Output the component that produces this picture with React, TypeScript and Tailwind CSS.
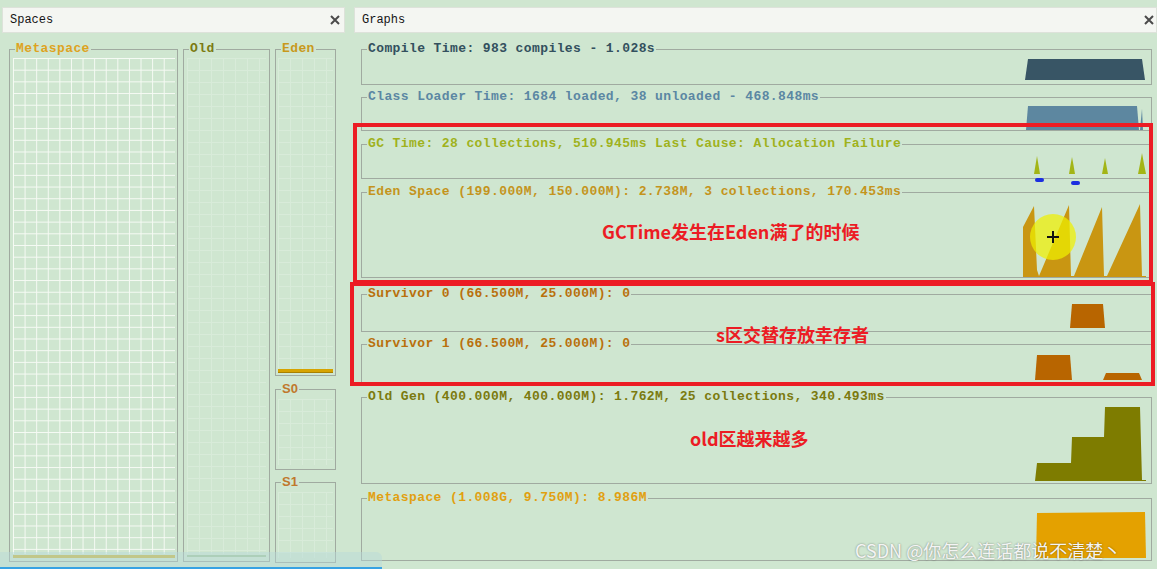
import React from "react";

const mono =
  "font-['Liberation_Mono',monospace] font-bold text-[13px] tracking-[0.4px] leading-[14px] whitespace-nowrap";

const faintGrid =
  "bg-[linear-gradient(to_right,#d8ebd9_1px,transparent_1px),linear-gradient(to_bottom,#d8ebd9_1px,transparent_1px)] bg-size-[12px_12px]";

type GProps = {
  label: string;
  cls: string;
  top: number;
  hh: number;
  h: string;
  mt: string;
  children?: React.ReactNode;
};

function Graph({ label, cls, top, hh, h, mt, children }: GProps) {
  return (
    <fieldset className={`${h} ${mt} min-w-0 border border-[#a0aaa0]`}>
      <legend className={`ml-[5px] px-[1px] ${mono} ${cls}`}>{label}</legend>
      <svg
        width={788}
        height={hh - 15}
        viewBox={`363 ${top + 14} 788 ${hh - 15}`}
        className="block"
      >
        {children}
      </svg>
    </fieldset>
  );
}

function Header({ title, pr }: { title: string; pr: string }) {
  return (
    <div
      className={`h-[26px] shrink-0 flex items-center justify-between pl-[7px] ${pr} bg-[#f4f6f2] border border-[#dde2da]`}
    >
      <span className="font-['Liberation_Mono',monospace] text-[12px] text-[#151515]">
        {title}
      </span>
      <svg width="10" height="10" viewBox="0 0 10 10">
        <path d="M1 1 L9 9 M9 1 L1 9" stroke="#4a4a4a" strokeWidth="2" />
      </svg>
    </div>
  );
}

export default function App() {
  return (
    <div className="relative w-[1157px] h-[569px] overflow-hidden bg-[#cfe6d0] pt-[7px] flex">
      {/* Spaces panel */}
      <div className="ml-[2px] w-[343px] flex flex-col">
        <Header title="Spaces" pr="pr-[4px]" />
        <div className="flex pl-[7px] pt-[9px] gap-[5px]">
          <fieldset className="w-[169px] h-[520px] min-w-0 border border-[#a0aaa0]">
            <legend className={`ml-[5px] px-[1px] ${mono} text-[#dea31f]`}>Metaspace</legend>
            <div className="ml-[3px] mt-[2px] w-[162px] h-[496px] bg-[linear-gradient(to_right,#f6faf4_1px,transparent_1px),linear-gradient(to_bottom,#f6faf4_1px,transparent_1px)] bg-size-[11.6px_11.7px]" />
            <div className="ml-[3px] mt-[1px] w-[162px] h-[3px] bg-[#cbb947]" />
          </fieldset>
          <fieldset className="w-[87px] h-[520px] min-w-0 border border-[#a0aaa0]">
            <legend className={`ml-[5px] px-[1px] ${mono} text-[#7b7a12]`}>Old</legend>
            <div className={`ml-[3px] mt-[2px] w-[79px] h-[496px] ${faintGrid}`} />
            <div className="ml-[3px] mt-[1px] w-[79px] h-[2px] bg-[#a6c79e]" />
          </fieldset>
          <div className="w-[61px] flex flex-col">
            <fieldset className="h-[334px] min-w-0 border border-[#a0aaa0]">
              <legend className={`ml-[5px] px-[1px] ${mono} text-[#c8991c]`}>Eden</legend>
              <div className={`ml-[2px] mt-[2px] w-[55px] h-[311px] ${faintGrid}`} />
              <div className="ml-[2px] w-[55px] h-[4px] bg-[#d6a300] border-b border-[#a88000]" />
            </fieldset>
            <fieldset className="mt-[6px] h-[88px] min-w-0 border border-[#a0aaa0]">
              <legend className={`ml-[5px] px-[1px] font-['Liberation_Sans',sans-serif] font-bold text-[13px] leading-[14px] text-[#c0782c]`}>
                S0
              </legend>
              <div className={`ml-[2px] mt-[3px] w-[55px] h-[66px] ${faintGrid}`} />
            </fieldset>
            <fieldset className="mt-[5px] h-[88px] min-w-0 border border-[#a0aaa0]">
              <legend className={`ml-[5px] px-[1px] font-['Liberation_Sans',sans-serif] font-bold text-[13px] leading-[14px] text-[#c0782c]`}>
                S1
              </legend>
              <div className={`ml-[2px] mt-[3px] w-[55px] h-[66px] ${faintGrid}`} />
            </fieldset>
          </div>
        </div>
      </div>

      {/* Graphs panel */}
      <div className="ml-[9px] flex-1 flex flex-col">
        <Header title="Graphs" pr="pr-[2px]" />
        <div className="flex flex-col pl-[7px] pr-[5px]">
          <Graph label="Compile Time: 983 compiles - 1.028s" cls="text-[#33505e]" top={42} hh={43} h="h-[43px]" mt="mt-[9px]">
            <polygon points="1026,80 1029,59 1143,59 1146,80" fill="#385565" />
          </Graph>
          <Graph label="Class Loader Time: 1684 loaded, 38 unloaded - 468.848ms" cls="text-[#5b87a3]" top={90} hh={41} h="h-[41px]" mt="mt-[5px]">
            <polygon points="1027,130 1029,106 1138,106 1140,130" fill="#5d87a0" />
            <polygon points="1141,130 1143,109 1144,130" fill="#5d87a0" />
          </Graph>
          <Graph label="GC Time: 28 collections, 510.945ms Last Cause: Allocation Failure" cls="text-[#9fb21c]" top={137} hh={42} h="h-[42px]" mt="mt-[6px]">
            <polygon points="1035,174 1036.5,165 1038,156 1039.5,165 1041,174" fill="#a3b516" />
            <polygon points="1070,174 1071.5,165 1073,157 1074.5,165 1076,174" fill="#a3b516" />
            <polygon points="1103,174 1104.5,166 1106,158 1107.5,166 1109,174" fill="#a3b516" />
            <polygon points="1139,174 1141,164 1143,153 1145,164 1147,174" fill="#a3b516" />
          </Graph>
          <Graph label="Eden Space (199.000M, 150.000M): 2.738M, 3 collections, 170.453ms" cls="text-[#c4941c]" top={185} hh={93} h="h-[93px]" mt="mt-[6px]">
            <polygon
              points="1024,277 1024,227 1035,206 1038,270 1040,276 1070,205 1072,276 1075,276 1103,207 1105,276 1108,276 1141,204 1143,276 1147,276 1147,277"
              fill="#c99612"
            />
            <circle cx="1054" cy="237" r="23" fill="#eef000" opacity="0.72" />
            <path d="M1048 237 H1060 M1054 231 V243" stroke="#111" strokeWidth="2" />
          </Graph>
          <Graph label="Survivor 0 (66.500M, 25.000M): 0" cls="text-[#b9700c]" top={287} hh={45} h="h-[45px]" mt="mt-[9px]">
            <polygon points="1071,328 1073,304 1104,304 1106,328" fill="#b86500" />
          </Graph>
          <Graph label="Survivor 1 (66.500M, 25.000M): 0" cls="text-[#b9700c]" top={337} hh={46} h="h-[46px]" mt="mt-[5px]">
            <polygon points="1036,380 1038,355 1071,355 1073,380" fill="#b86500" />
            <polygon points="1104,380 1107,373 1140,373 1143,380" fill="#b86500" />
          </Graph>
          <Graph label="Old Gen (400.000M, 400.000M): 1.762M, 25 collections, 340.493ms" cls="text-[#7b7a0e]" top={390} hh={94} h="h-[94px]" mt="mt-[7px]">
            <polygon
              points="1036,481 1038,463 1072,463 1073,437 1105,437 1106,407 1141,407 1143,480 1147,480 1147,481"
              fill="#7e7c00"
            />
          </Graph>
          <Graph label="Metaspace (1.008G, 9.750M): 8.986M" cls="text-[#e1a010]" top={491} hh={70} h="h-[70px]" mt="mt-[7px]">
            <polygon points="1037,558 1038,513 1146,512 1147,558" fill="#e4a100" />
          </Graph>
        </div>
      </div>

      {/* overlays: GC markers */}
      <div className="absolute left-[1035px] top-[178px] w-[9px] h-[4px] rounded-full bg-[#1c2fe0]" />
      <div className="absolute left-[1071px] top-[181px] w-[9px] h-[4px] rounded-full bg-[#1c2fe0]" />

      {/* red annotations */}
      <div className="absolute left-[353px] top-[123px] w-[800px] h-[161px] border-[4px] border-[#ec1c24]" />
      <div className="absolute left-[350px] top-[282px] w-[805px] h-[104px] border-[4px] border-[#ec1c24]" />
      <div className="absolute left-[602px] top-[218px] leading-[26px] text-[18px] font-bold text-[#ec1c24] font-['Noto_Sans_CJK_SC',sans-serif] whitespace-nowrap">
        GCTime发生在Eden满了的时候
      </div>
      <div className="absolute left-[716px] top-[321px] leading-[26px] text-[18px] font-bold text-[#ec1c24] font-['Noto_Sans_CJK_SC',sans-serif] whitespace-nowrap">
        s区交替存放幸存者
      </div>
      <div className="absolute left-[690px] top-[425px] leading-[26px] text-[18px] font-bold text-[#ec1c24] font-['Noto_Sans_CJK_SC',sans-serif] whitespace-nowrap">
        old区越来越多
      </div>

      {/* bottom-left taskbar tint */}
      <div className="absolute left-0 bottom-[2px] w-[382px] h-[15px] rounded-tr-[6px] bg-[#b6d9da]/45" />
      <div className="absolute left-0 bottom-0 w-[382px] h-[2px] bg-[#37a2e3]" />

      {/* watermark */}
      <div className="absolute left-[855px] top-[539px] leading-[22px] text-[18px] text-[#f4f4f4] font-['Noto_Sans_CJK_SC',sans-serif] whitespace-nowrap [text-shadow:0_0_2px_rgba(0,0,0,0.45)]">
        CSDN @你怎么连话都说不清楚丶
      </div>
    </div>
  );
}
